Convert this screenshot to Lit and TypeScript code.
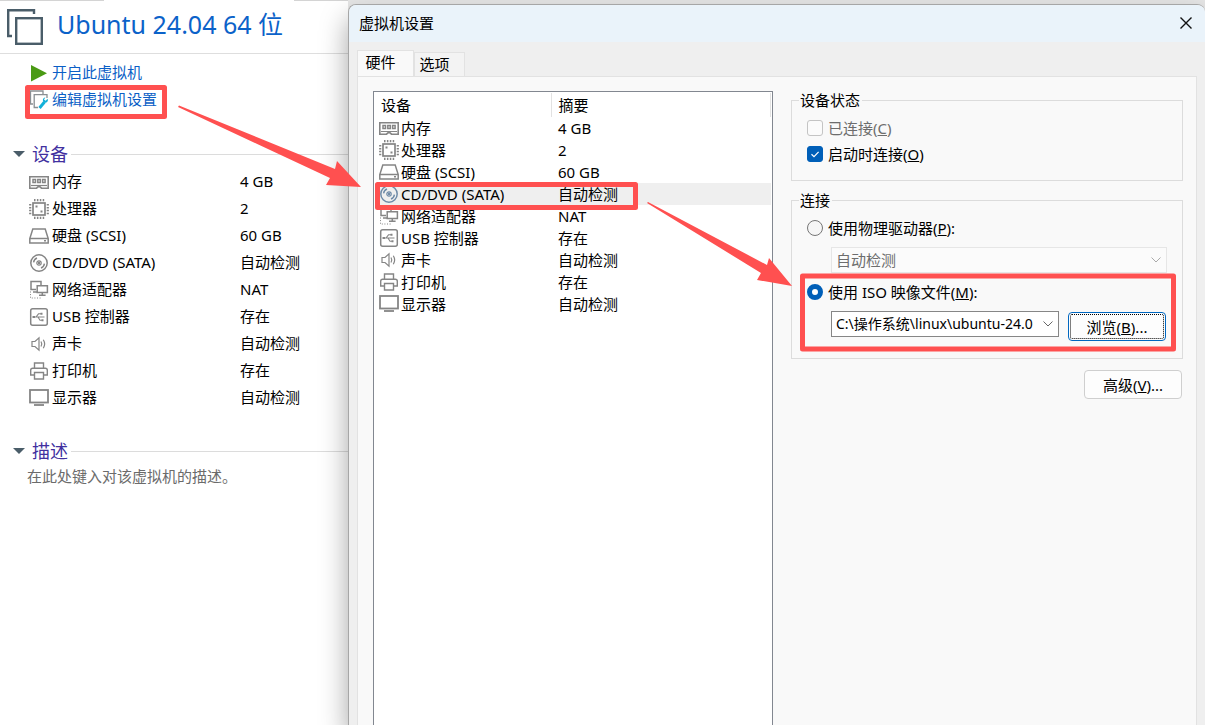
import { LitElement, html, svg, css } from "lit";
import { customElement } from "lit/decorators.js";

type Device = { icon: string; name: string; summary: string };

const DEVICES: Device[] = [
  { icon: "memory", name: "内存", summary: "4 GB" },
  { icon: "cpu", name: "处理器", summary: "2" },
  { icon: "disk", name: "硬盘 (SCSI)", summary: "60 GB" },
  { icon: "cd", name: "CD/DVD (SATA)", summary: "自动检测" },
  { icon: "network", name: "网络适配器", summary: "NAT" },
  { icon: "usb", name: "USB 控制器", summary: "存在" },
  { icon: "sound", name: "声卡", summary: "自动检测" },
  { icon: "printer", name: "打印机", summary: "存在" },
  { icon: "display", name: "显示器", summary: "自动检测" },
];

const GLYPHS: Record<string, unknown> = {
  memory: svg`
    <path d="M0.8 4.8H19.2V16.2H12.5L11 14.8H9L7.5 16.2H0.8Z" stroke-width="1.6" />
    <path d="M4 7.5H6.5V10.5H4ZM8.8 7.5H11.3V10.5H8.8ZM13.6 7.5H16.1V10.5H13.6Z" stroke-width="1.5" />
    <path d="M2 13.5H18" stroke-width="1.2" />`,
  cpu: svg`
    <rect x="4" y="4" width="12" height="12" stroke-width="1.7" />
    <path d="M5 1.2H15.5M5 18.8H15.5" stroke-width="2.2" stroke-dasharray="1.5 1.4" />
    <path d="M1.2 5V15.5M18.8 5V15.5" stroke-width="2.2" stroke-dasharray="1.5 1.4" />
    <path d="M6.5 7.5H8.5M11.5 12.5H13.5" stroke-width="2" />`,
  disk: svg`
    <path d="M3.8 3H16.2L19.2 12.5V17H0.8V12.5Z" stroke-width="1.5" />
    <path d="M0.8 12.5H19.2" stroke-width="1.5" />
    <path d="M15 14.8H17" stroke-width="1.4" />`,
  cd: svg`
    <circle cx="10" cy="10" r="8.2" stroke-width="1.5" />
    <circle cx="10" cy="10" r="2.2" />
    <circle cx="10" cy="10" r="0.6" />
    <path d="M4.6 9.4A5.4 5.4 0 0 1 8 5M15.4 10.6A5.4 5.4 0 0 1 12 15" stroke-width="1.4" />`,
  network: svg`
    <path d="M7 9.5H2V1.5H12V5" stroke-width="1.5" />
    <path d="M8.2 5.8H18.4V12.4H8.2Z" stroke-width="1.5" />
    <path d="M13.3 12.4V15M10 15.3H16.6M4 12H8" stroke-width="1.5" />
    <path d="M1.5 11.5V18H13" stroke-width="1" stroke-dasharray="1 1.6" />`,
  usb: svg`
    <rect x="1.7" y="1.7" width="16.6" height="16.6" rx="2" stroke-width="1.5" />
    <path d="M4 10H15.5M7 10L9.5 6.8H12M9 10L11 13.2H13" stroke-width="1.1" />
    <path d="M3.5 10H6M11.5 6.8H13.5M12.5 13.2H14.5" stroke-width="2" />`,
  sound: svg`
    <path d="M3 7.5H6L10 3.8V16.2L6 12.5H3Z" />
    <path d="M12 7.5Q13.6 10 12 12.5M14.3 5.8Q17 10 14.3 14.2" />`,
  printer: svg`
    <path d="M5.5 7V2H14.5V7" stroke-width="1.4" />
    <path d="M5 14H1.7V9.2Q1.7 7.2 3.7 7.2H16.3Q18.3 7.2 18.3 9.2V14H15" stroke-width="1.4" />
    <path d="M5.5 11.5H14.5V18H5.5Z" stroke-width="1.4" />`,
  display: svg`
    <rect x="1" y="2" width="18" height="12.5" stroke-width="1.8" />
    <path d="M5 17H15" stroke-width="1.8" />`,
};

const deviceIcon = (name: string, tint = "#858585") => html`
  <svg class="icon" width="20" height="20" viewBox="0 0 20 20" fill="none" stroke=${tint}
    stroke-width="1.2" aria-hidden="true">${GLYPHS[name]}</svg>`;

@customElement("vm-summary")
export class VmSummary extends LitElement {
  static styles = css`
    :host { display: block; background: #fff; color: #000; }
    .tabs { display: flex; height: 1px; background: #d4d4d4; }
    .tab { width: 98px; margin-left: 3px; }
    .tab-open { width: 190px; margin-left: 3px; background: #fff; }
    .head { display: flex; align-items: center; gap: 13px; height: 52px; padding-left: 7px;
      border-bottom: 1px solid #dedede; }
    .title { margin: 0; font-size: 25px; line-height: 32px; font-weight: 400; color: #0b62c9;
      padding-bottom: 6px; }
    .actions { display: flex; flex-direction: column; padding: 5px 0 0 29px; }
    .action { display: flex; align-items: center; gap: 3px; height: 27px; line-height: 27px;
      color: #0b5fc6; text-decoration: none; }
    .icon { display: block; flex: none; }
    .section { display: flex; align-items: center; gap: 3px; margin: 0; padding-left: 13px;
      height: 28px; }
    .section-name { padding-left: 4px; font-size: 18px; font-weight: 400; color: #41309f; }
    .rule { flex: 1; height: 1px; background: #dcdcdc; }
    .hardware { margin-top: 27px; }
    .about { margin-top: 26px; }
    .devices { border-collapse: collapse; margin-left: 29px; }
    .devices th, .devices td { height: 27px; padding: 0; line-height: 27px; font-weight: 400;
      text-align: left; }
    .name { display: flex; align-items: center; gap: 3px; width: 211px; }
    .note { margin: 0; padding-left: 27px; line-height: 22px; color: #6b6b6b; }
  `;

  render() {
    return html`
      <div class="tabs"><span class="tab"></span><span class="tab-open"></span></div>
      <header class="head">
        <svg class="icon" width="37" height="37" viewBox="0 0 37 37" fill="none" stroke="#4a5d69"
          stroke-width="2.4" aria-hidden="true">
          <path d="M27 5V1.2H1.2V27H5" />
          <rect x="9.2" y="9.2" width="25.6" height="25.6" />
        </svg>
        <h1 class="title">Ubuntu 24.04 64 位</h1>
      </header>
      <nav class="actions">
        <a class="action" href="#start">
          <svg class="icon" width="20" height="20" viewBox="0 0 20 20" aria-hidden="true">
            <path d="M2 2L18 10.3L2 18.5Z" fill="#4a9a14" />
          </svg>开启此虚拟机</a>
        <a class="action" href="#edit">
          <svg class="icon" width="20" height="20" viewBox="0 0 20 20" fill="none"
            stroke="#8a8f93" stroke-width="1.3" aria-hidden="true">
            <path d="M14 4V1H1.5V14H4" />
            <path d="M18 8V4.7H5.2V17.5H9" />
            <path d="M10.5 18L15.5 12" stroke="#12b0d8" stroke-width="3" />
            <path d="M18.6 8.8L16.6 10.8L15 9.4L16.4 7.4Q13.6 7.8 13.9 10.8Q15 13.4 17.4 12.6Q19.6 11.4 18.6 8.8Z"
              fill="#12b0d8" stroke="none" />
          </svg>编辑虚拟机设置</a>
      </nav>
      <h2 class="section hardware">
        <svg class="icon" width="12" height="6" viewBox="0 0 12 6" aria-hidden="true">
          <path d="M0 0H12L6 6Z" fill="#4a5d69" /></svg>
        <span class="section-name">设备</span><span class="rule"></span>
      </h2>
      <table class="devices">
        <tbody>
          ${DEVICES.map((d) => html`<tr>
            <th scope="row"><span class="name">${deviceIcon(d.icon)}${d.name}</span></th>
            <td>${d.summary}</td>
          </tr>`)}
        </tbody>
      </table>
      <h2 class="section about">
        <svg class="icon" width="12" height="6" viewBox="0 0 12 6" aria-hidden="true">
          <path d="M0 0H12L6 6Z" fill="#4a5d69" /></svg>
        <span class="section-name">描述</span><span class="rule"></span>
      </h2>
      <p class="note">在此处键入对该虚拟机的描述。</p>
    `;
  }
}

@customElement("vm-settings")
export class VmSettings extends LitElement {
  static styles = css`
    * { box-sizing: border-box; }
    :host { display: flex; flex-direction: column; box-sizing: border-box; background: #efefef;
      color: #000; border: 1px solid #a6a6a6; border-width: 1px 0 0 1px;
      border-radius: 8px 8px 0 0; box-shadow: 0 14px 28px rgba(0, 0, 0, 0.36); overflow: hidden; }
    button, select, input { font: inherit; color: inherit; margin: 0; }
    .bar { display: flex; align-items: center; justify-content: space-between; height: 37px;
      padding: 0 10px 2px; background: #eaf3fa; }
    .caption { margin: 0; font-size: 15px; font-weight: 400; line-height: 24px; }
    .close { display: grid; place-items: center; width: 18px; height: 18px; padding: 0;
      border: 0; background: none; }
    .tabs { display: flex; align-items: flex-end; padding: 8px 8px 0; }
    .tab { border: 1px solid #e2e2e2; border-bottom: 0; background: #f3f3f3; height: 24px;
      width: 51px; padding: 0 10px 0 0; line-height: 22px; white-space: nowrap;
      display: flex; justify-content: center; }
    .tab-on { height: 26px; width: 57px; background: #f9f9f9; }
    .page { flex: 1; display: grid; grid-template-columns: 400px minmax(0, 1fr); gap: 18px;
      margin: 0 8px; padding: 14px 13px 0 15px; background: #f9f9f9;
      border: 1px solid #e2e2e2; border-bottom: 0; }
    .list { background: #fff; border: 1px solid #828790; border-bottom: 0; padding: 1px; }
    .grid { width: 100%; border-collapse: collapse; table-layout: fixed; }
    .grid th, .grid td { height: 22px; padding: 0; line-height: 22px; font-weight: 400;
      text-align: left; white-space: nowrap; }
    .grid .head-cell { height: 24px; line-height: 24px; padding-left: 6px;
      border-right: 1px solid #e2e2e2; }
    .col-name { width: 176px; }
    .grid .value, .grid .head-cell + .head-cell { padding-left: 7px; }
    .name { display: flex; align-items: center; gap: 2px; padding-left: 4px; }
    .icon { display: block; flex: none; }
    .selected { background: #efefef; }
    .options { display: flex; flex-direction: column; align-items: stretch; }
    .group { min-width: 0; margin: 0 0 10px; padding: 6px 15px 13px; border: 1px solid #dcdcdc; }
    .group legend { padding: 0 2px 0 1px; margin-left: -8px; line-height: 18px; }
    .choice { display: flex; align-items: center; gap: 5px; height: 26px; line-height: 26px; }
    .connection { padding-bottom: 17px; }
    .off { color: #6d6d6d; }
    .box, .dot { appearance: none; width: 16px; height: 16px; flex: none; border: 1px solid #767676;
      background: #f6f6f6; }
    .box { border-radius: 3px; }
    .box:disabled { border-color: #c4c4c4; background: #fbfbfb; }
    .box:checked { border-color: #005fb8; background: #005fb8
      url("data:image/svg+xml,%3Csvg xmlns='http://www.w3.org/2000/svg' viewBox='0 0 14 14'%3E%3Cpath d='M3.5 7.2L6 9.6L10.6 4.8' fill='none' stroke='white' stroke-width='1.2'/%3E%3C/svg%3E"); }
    .dot { border-radius: 50%; }
    .dot:checked { border: 5px solid #005fb8; background: #fff; }
    .combo { appearance: none; display: block; height: 26px; width: 100%; padding: 0 20px 0 4px;
      border: 1px solid #868686; border-radius: 0; font: inherit; text-overflow: clip;
      background: #fff url("data:image/svg+xml,%3Csvg xmlns='http://www.w3.org/2000/svg' width='10' height='6' viewBox='0 0 10 6'%3E%3Cpath d='M.5 .5L5 5L9.5 .5' fill='none' stroke='%23666'/%3E%3C/svg%3E") no-repeat right 5px center; }
    .combo:disabled { opacity: 1; color: #6d6d6d; border-color: #e6e6e6; background-color: #fbfbfb;
      background-image: url("data:image/svg+xml,%3Csvg xmlns='http://www.w3.org/2000/svg' width='10' height='6' viewBox='0 0 10 6'%3E%3Cpath d='M.5 .5L5 5L9.5 .5' fill='none' stroke='%23aaa'/%3E%3C/svg%3E"); }
    .physical { margin: 6px 0 6px 24px; }
    .iso { display: flex; align-items: flex-start; gap: 9px; margin: 6px 1px 0 24px; }
    .iso .combo { flex: 1; min-width: 0; font-size: 14px; }
    .push { height: 29px; width: 98px; padding: 0; border: 1px solid #cfcfcf; border-radius: 4px;
      background: #fdfdfd; line-height: 24px; }
    .browse { margin-top: 1px; border-color: #0067c0; outline: 1px dotted #000;
      outline-offset: -3px; }
    .advanced { align-self: flex-end; margin: 1px 1px 0; }
  `;

  render() {
    return html`
      <header class="bar">
        <h2 class="caption">虚拟机设置</h2>
        <button class="close" aria-label="关闭">
          <svg width="12" height="12" viewBox="0 0 12 12" stroke="#111" stroke-width="1.4" aria-hidden="true">
            <path d="M0.5 0.5L11.5 11.5M11.5 0.5L0.5 11.5" /></svg>
        </button>
      </header>
      <div class="tabs" role="tablist">
        <button class="tab tab-on" role="tab" aria-selected="true">硬件</button>
        <button class="tab" role="tab" aria-selected="false">选项</button>
      </div>
      <div class="page">
        <div class="list">
          <table class="grid">
            <colgroup><col class="col-name" /><col /></colgroup>
            <thead><tr><th class="head-cell" scope="col">设备</th><th class="head-cell" scope="col">摘要</th></tr></thead>
            <tbody>
              ${DEVICES.map((d) => html`<tr class=${d.icon === "cd" ? "selected" : ""}>
                <td><span class="name">${deviceIcon(d.icon, d.icon === "cd" ? "#6f8ba8" : "#858585")}${d.name}</span></td>
                <td class="value">${d.summary}</td>
              </tr>`)}
            </tbody>
          </table>
        </div>
        <div class="options">
          <fieldset class="group">
            <legend>设备状态</legend>
            <label class="choice off"><input class="box" type="checkbox" disabled /><span>已连接(<u>C</u>)</span></label>
            <label class="choice"><input class="box" type="checkbox" checked /><span>启动时连接(<u>O</u>)</span></label>
          </fieldset>
          <fieldset class="group connection">
            <legend>连接</legend>
            <label class="choice"><input class="dot" type="radio" name="source" /><span>使用物理驱动器(<u>P</u>):</span></label>
            <div class="physical">
              <select class="combo" disabled aria-label="物理驱动器"><option>自动检测</option></select>
            </div>
            <label class="choice"><input class="dot" type="radio" name="source" checked /><span>使用 ISO 映像文件(<u>M</u>):</span></label>
            <div class="iso">
              <select class="combo" aria-label="ISO 映像文件"><option>C:\\操作系统\\linux\\ubuntu-24.0</option></select>
              <button class="push browse">浏览(<u>B</u>)...</button>
            </div>
          </fieldset>
          <button class="push advanced">高级(<u>V</u>)...</button>
        </div>
      </div>
    `;
  }
}

@customElement("app-root")
export class AppRoot extends LitElement {
  static styles = css`
    :host { display: grid; grid-template-columns: 348px minmax(0, 1fr); position: relative;
      min-height: 100vh; overflow: hidden; background: #e6e6e6;
      font: 15px/24px "Noto Sans", "Noto Sans CJK SC", sans-serif; }
    .dialog { margin-top: 4px; z-index: 1; }
    .marks { position: absolute; top: 0; left: 0; width: 100%; height: 100%; z-index: 2;
      pointer-events: none; }
  `;

  render() {
    return html`
      <vm-summary lang="zh-CN"></vm-summary>
      <vm-settings class="dialog" lang="zh-CN"></vm-settings>
      <svg class="marks" fill="none" stroke="#ff5050" stroke-width="5" stroke-linejoin="round" aria-hidden="true">
        <rect x="27.5" y="87.5" width="137" height="29" />
        <rect x="377.5" y="184.5" width="258" height="23" />
        <rect x="802.5" y="276" width="371" height="73" />
        <path d="M179 105.5L335 169L337 161L361 187L326 185L330 178L178 107Z" fill="#ff5050" stroke="none" />
        <path d="M648 202L767 265L769 258L792 286L757 280L761 273L647 203Z" fill="#ff5050" stroke="none" />
      </svg>
    `;
  }
}
